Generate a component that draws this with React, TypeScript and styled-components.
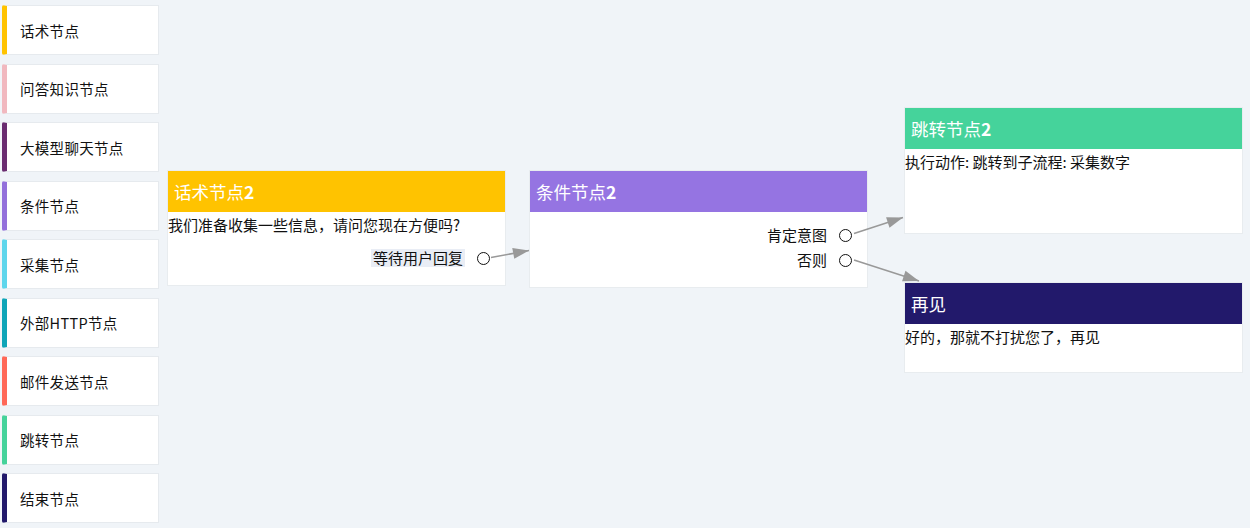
import React from 'react';
import styled, { createGlobalStyle } from 'styled-components';

const GlobalStyle = createGlobalStyle`
  html, body {
    margin: 0;
    padding: 0;
    background: #f0f4f8;
  }
  body {
    font-family: "Noto Sans CJK SC", "Noto Sans", sans-serif;
    color: #111;
  }
`;

const Page = styled.div`
  position: relative;
  width: 1250px;
  height: 528px;
  display: flex;
  overflow: hidden;
`;

const Palette = styled.div`
  display: flex;
  flex-direction: column;
  gap: 8.5px;
  padding: 5px 0 0 2px;
  width: 157px;
  flex-shrink: 0;
`;

const PaletteItem = styled.div<{ $color: string }>`
  box-sizing: border-box;
  height: 50px;
  display: flex;
  align-items: center;
  padding-left: 13px;
  background: #fff;
  border: 1px solid #e6eaee;
  border-left: 5px solid ${(p) => p.$color};
  border-radius: 2px 0 0 2px;
  font-size: 14.5px;
  letter-spacing: 0.3px;
`;

const Canvas = styled.div`
  position: relative;
  flex: 1;
`;

const Node = styled.div<{ $x: number; $y: number; $h: number }>`
  position: absolute;
  left: ${(p) => p.$x}px;
  top: ${(p) => p.$y}px;
  width: 339px;
  height: ${(p) => p.$h}px;
  box-sizing: border-box;
  background: #fff;
  border: 1px solid #e8ecef;
  display: flex;
  flex-direction: column;
`;

const NodeHeader = styled.div<{ $color: string }>`
  height: 41px;
  flex-shrink: 0;
  background: ${(p) => p.$color};
  color: #fff;
  font-size: 17.5px;
  display: flex;
  align-items: center;
  padding-left: 6px;
  b {
    font-weight: 700;
  }
`;

const NodeText = styled.div`
  font-size: 15px;
  line-height: 22px;
  margin-top: 2px;
  white-space: nowrap;
`;

const Outputs = styled.div<{ $top: number }>`
  display: flex;
  flex-direction: column;
  align-items: flex-end;
  gap: 7px;
  margin-top: ${(p) => p.$top}px;
  padding-right: 15px;
`;

const OutputRow = styled.div`
  display: flex;
  align-items: center;
  gap: 12px;
  height: 18px;
  font-size: 15px;
`;

const OutputLabel = styled.span<{ $tag?: boolean }>`
  background: ${(p) => (p.$tag ? '#e9edf5' : 'transparent')};
  padding: 0 ${(p) => (p.$tag ? '2px' : '0')};
  line-height: 18px;
`;

const Port = styled.span`
  width: 11px;
  height: 11px;
  border: 1.5px solid #111;
  border-radius: 50%;
  background: #fff;
`;

const Edges = styled.svg`
  position: absolute;
  left: 0;
  top: 0;
  width: 1250px;
  height: 528px;
  pointer-events: none;
`;

const palette = [
  { name: '话术节点', color: '#ffc300' },
  { name: '问答知识节点', color: '#f1b8bf' },
  { name: '大模型聊天节点', color: '#6a2c70' },
  { name: '条件节点', color: '#9370db' },
  { name: '采集节点', color: '#5ed6ec' },
  { name: '外部HTTP节点', color: '#0ea5b8' },
  { name: '邮件发送节点', color: '#ff6858' },
  { name: '跳转节点', color: '#45d39b' },
  { name: '结束节点', color: '#22196b' },
];

const edges = [
  [491, 257.5, 529, 250.5],
  [854, 233.5, 903, 217.5],
  [854, 260, 919, 281],
];

const App = () => {
  return (
    <Page>
      <GlobalStyle />
      <Palette>
        {palette.map((p) => (
          <PaletteItem key={p.name} $color={p.color}>
            {p.name}
          </PaletteItem>
        ))}
      </Palette>
      <Canvas>
        {/* 话术节点 */}
        <Node $x={8} $y={170} $h={116}>
          <NodeHeader $color="#ffc300">
            话术节点<b>2</b>
          </NodeHeader>
          <NodeText>我们准备收集一些信息，请问您现在方便吗?</NodeText>
          <Outputs $top={13}>
            <OutputRow>
              <OutputLabel $tag>等待用户回复</OutputLabel>
              <Port />
            </OutputRow>
          </Outputs>
        </Node>

        {/* 条件节点 */}
        <Node $x={370} $y={170} $h={118}>
          <NodeHeader $color="#9574e2">
            条件节点<b>2</b>
          </NodeHeader>
          <Outputs $top={14}>
            <OutputRow>
              <OutputLabel>肯定意图</OutputLabel>
              <Port />
            </OutputRow>
            <OutputRow>
              <OutputLabel>否则</OutputLabel>
              <Port />
            </OutputRow>
          </Outputs>
        </Node>

        {/* 跳转节点 */}
        <Node $x={745} $y={107} $h={127}>
          <NodeHeader $color="#45d39b">
            跳转节点<b>2</b>
          </NodeHeader>
          <NodeText>执行动作: 跳转到子流程: 采集数字</NodeText>
        </Node>

        {/* 结束节点 */}
        <Node $x={745} $y={282} $h={91}>
          <NodeHeader $color="#22196b">再见</NodeHeader>
          <NodeText>好的，那就不打扰您了，再见</NodeText>
        </Node>
      </Canvas>

      <Edges viewBox="0 0 1250 528">
        {edges.map(([x1, y1, x2, y2], i) => (
          <line
            key={i}
            x1={x1}
            y1={y1}
            x2={x2}
            y2={y2}
            stroke="#999"
            strokeWidth={1.5}
          />
        ))}
        {edges.map(([x1, y1, x2, y2], i) => {
          const a = Math.atan2(y2 - y1, x2 - x1);
          const len = 16;
          const w = 5.5;
          const bx = x2 - Math.cos(a) * len;
          const by = y2 - Math.sin(a) * len;
          const px = -Math.sin(a) * w;
          const py = Math.cos(a) * w;
          return (
            <polygon
              key={`h${i}`}
              points={`${x2},${y2} ${bx + px},${by + py} ${bx - px},${by - py}`}
              fill="#999"
            />
          );
        })}
      </Edges>
    </Page>
  );
};

export default App;
